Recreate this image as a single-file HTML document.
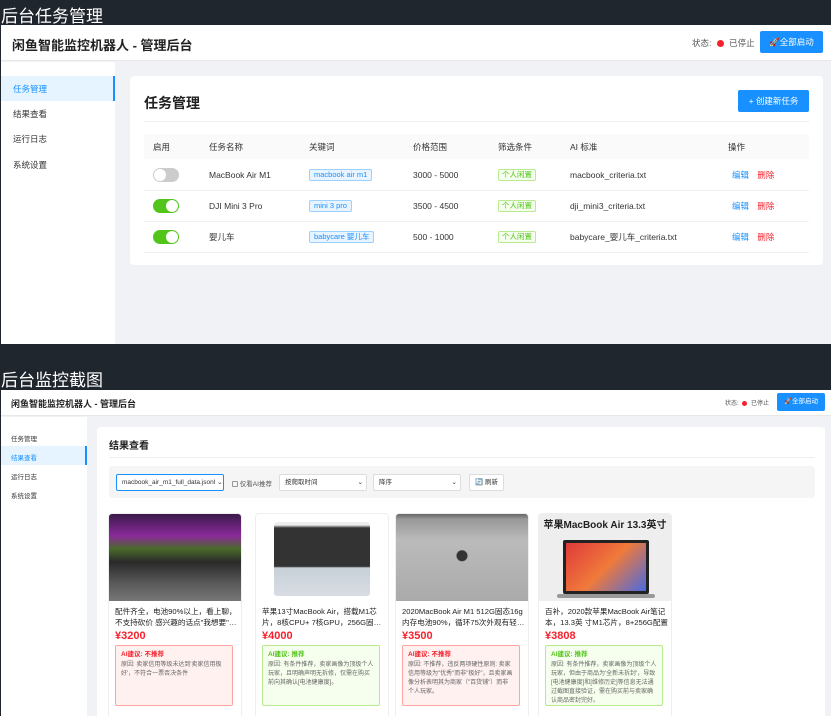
<!DOCTYPE html>
<html><head><meta charset="utf-8"><style>
*{margin:0;padding:0;box-sizing:border-box}
html,body{width:831px;height:716px;overflow:hidden}
body{position:relative;background:#20262e;font-family:"Liberation Sans","Noto Sans CJK SC",sans-serif;color:#333}
.a{position:absolute}
.lbl{color:#fff;font-size:17px;left:1px}
.t{font-size:8.5px;color:#333;white-space:nowrap;line-height:12px}
.tag{border:1px solid #9cd0ff;background:#e8f4ff;color:#1890ff;font-size:7.5px;line-height:10px;padding:0 4px;border-radius:2px;white-space:nowrap}
.gtag{border:1px solid #b7eb8f;background:#f6ffed;color:#52c41a;font-size:7.5px;line-height:10px;padding:0 3px;border-radius:2px;white-space:nowrap}
.sw{width:26px;height:14px;border-radius:7px}
.sw i{position:absolute;top:1px;width:12px;height:12px;border-radius:50%;background:#fff}
.btn{background:#1890ff;color:#fff;border-radius:2px;text-align:center}
.pc{background:#fff;border:1px solid #eee;border-radius:4px;width:134px;top:513px;height:210px;overflow:hidden}
.pc .img{height:87px}
.pc .tt{position:absolute;left:6px;top:92px;width:124px;font-size:7.6px;line-height:11px;color:#222;display:-webkit-box;-webkit-line-clamp:2;-webkit-box-orient:vertical;overflow:hidden;height:22px}
.pc .pr{position:absolute;left:6px;top:116px;font-size:11px;color:#f5222d;font-weight:bold}
.ai{position:absolute;left:6px;top:131px;width:118px;height:61px;border-radius:2px;padding:4px 5px;font-size:6px;line-height:9px;color:#666}
.ai b{display:block;font-size:6.5px;margin-bottom:2px}
.no{background:#fff1f0;border:1px solid #ffa39e}.no b{color:#f5222d}
.yes{background:#f6ffed;border:1px solid #b7eb8f}.yes b{color:#52c41a}
</style></head><body>
<div class="a lbl" style="top:2px">后台任务管理</div>
<div class="a" style="left:1px;top:25px;width:830px;height:319px;background:#f0f2f5"></div>
<div class="a" style="left:1px;top:25px;width:830px;height:36px;background:#fff;border-bottom:1px solid #e8e8e8"></div>
<div class="a" style="left:12px;top:35px;font-size:13px;font-weight:bold;color:#222">闲鱼智能监控机器人 - 管理后台</div>
<div class="a t" style="left:692px;top:37px;color:#555">状态: <span style="display:inline-block;width:7px;height:7px;border-radius:50%;background:#f5222d;vertical-align:-1px;margin:0 3px"></span> 已停止</div>
<div class="a btn" style="left:760px;top:31px;width:63px;height:22px;font-size:8.5px;line-height:22px">🚀全部启动</div>
<div class="a" style="left:1px;top:62px;width:114px;height:282px;background:#fff"></div>
<div class="a" style="left:1px;top:76px;width:114px;height:25px;background:#e6f4ff;border-right:2px solid #1890ff"></div>
<div class="a t" style="left:13px;top:83px;color:#1890ff">任务管理</div>
<div class="a t" style="left:13px;top:108px">结果查看</div>
<div class="a t" style="left:13px;top:133px">运行日志</div>
<div class="a t" style="left:13px;top:159px">系统设置</div>
<div class="a" style="left:130px;top:76px;width:693px;height:189px;background:#fff;border-radius:4px"></div>
<div class="a" style="left:144px;top:93px;font-size:14px;font-weight:bold;color:#222">任务管理</div>
<div class="a btn" style="left:738px;top:90px;width:71px;height:22px;font-size:8.5px;line-height:22px">+ 创建新任务</div>
<div class="a" style="left:144px;top:121px;width:665px;height:1px;background:#eee"></div>
<div class="a" style="left:144px;top:134px;width:665px;height:25px;background:#fafafa"></div>
<div class="a" style="left:144px;top:190px;width:665px;height:1px;background:#f0f0f0"></div>
<div class="a" style="left:144px;top:221px;width:665px;height:1px;background:#f0f0f0"></div>
<div class="a" style="left:144px;top:252px;width:665px;height:1px;background:#f0f0f0"></div>
<div class="a t" style="left:153px;top:141px">启用</div><div class="a t" style="left:209px;top:141px">任务名称</div><div class="a t" style="left:309px;top:141px">关键词</div><div class="a t" style="left:413px;top:141px">价格范围</div><div class="a t" style="left:498px;top:141px">筛选条件</div><div class="a t" style="left:570px;top:141px">AI 标准</div><div class="a t" style="left:728px;top:141px">操作</div>
<div class="a sw" style="left:153px;top:168px;background:#ccc"><i style="left:1px"></i></div>
<div class="a sw" style="left:153px;top:199px;background:#52c41a"><i style="left:13px"></i></div>
<div class="a sw" style="left:153px;top:230px;background:#52c41a"><i style="left:13px"></i></div>
<div class="a t" style="left:209px;top:169px">MacBook Air M1</div><div class="a tag" style="left:309px;top:169px">macbook air m1</div><div class="a t" style="left:413px;top:169px">3000 - 5000</div><div class="a gtag" style="left:498px;top:169px">个人闲置</div><div class="a t" style="left:570px;top:169px">macbook_criteria.txt</div>
<div class="a t" style="left:209px;top:200px">DJI Mini 3 Pro</div><div class="a tag" style="left:309px;top:200px">mini 3 pro</div><div class="a t" style="left:413px;top:200px">3500 - 4500</div><div class="a gtag" style="left:498px;top:200px">个人闲置</div><div class="a t" style="left:570px;top:200px">dji_mini3_criteria.txt</div>
<div class="a t" style="left:209px;top:231px">婴儿车</div><div class="a tag" style="left:309px;top:231px">babycare 婴儿车</div><div class="a t" style="left:413px;top:231px">500 - 1000</div><div class="a gtag" style="left:498px;top:231px">个人闲置</div><div class="a t" style="left:570px;top:231px">babycare_婴儿车_criteria.txt</div>
<div class="a t" style="left:732px;top:169px;color:#1890ff">编辑 <span style="color:#f5222d;margin-left:6px">删除</span></div>
<div class="a t" style="left:732px;top:200px;color:#1890ff">编辑 <span style="color:#f5222d;margin-left:6px">删除</span></div>
<div class="a t" style="left:732px;top:231px;color:#1890ff">编辑 <span style="color:#f5222d;margin-left:6px">删除</span></div>

<div class="a lbl" style="top:366px">后台监控截图</div>
<div class="a" style="left:1px;top:390px;width:830px;height:326px;background:#f0f2f5"></div>
<div class="a" style="left:1px;top:390px;width:830px;height:26px;background:#fff;border-bottom:1px solid #e8e8e8"></div>
<div class="a" style="left:11px;top:397px;font-size:9px;font-weight:bold;color:#222">闲鱼智能监控机器人 - 管理后台</div>
<div class="a" style="left:725px;top:398px;font-size:6px;color:#555;white-space:nowrap">状态: <span style="display:inline-block;width:5px;height:5px;border-radius:50%;background:#f5222d;vertical-align:-1px;margin:0 2px"></span> 已停止</div>
<div class="a btn" style="left:777px;top:393px;width:48px;height:18px;font-size:6.5px;line-height:18px">🚀全部启动</div>
<div class="a" style="left:1px;top:417px;width:86px;height:299px;background:#fff"></div>
<div class="a" style="left:1px;top:446px;width:86px;height:19px;background:#e6f4ff;border-right:2px solid #1890ff"></div>
<div class="a" style="left:11px;top:433px;font-size:6.5px">任务管理</div>
<div class="a" style="left:11px;top:452px;font-size:6.5px;color:#1890ff">结果查看</div>
<div class="a" style="left:11px;top:471px;font-size:6.5px">运行日志</div>
<div class="a" style="left:11px;top:490px;font-size:6.5px">系统设置</div>
<div class="a" style="left:97px;top:427px;width:728px;height:289px;background:#fff;border-radius:4px 4px 0 0;overflow:hidden">
<div class="a" style="left:12px;top:10px;font-size:10px;font-weight:bold;color:#222">结果查看</div>
<div class="a" style="left:12px;top:30px;width:706px;height:1px;background:#eee"></div>
<div class="a" style="left:12px;top:39px;width:706px;height:32px;background:#f5f5f5;border-radius:3px"></div>
<div class="a" style="left:19px;top:47px;width:108px;height:17px;background:#fff;border:1px solid #1890ff;border-radius:2px;font-size:6.5px;line-height:15px;padding-left:5px;white-space:nowrap">macbook_air_m1_full_data.jsonl ⌄</div>
<div class="a" style="left:135px;top:51px;font-size:6.5px;color:#555;white-space:nowrap"><span style="display:inline-block;width:6px;height:6px;border:1px solid #999;border-radius:1px;vertical-align:-1px"></span> 仅看AI推荐</div>
<div class="a" style="left:182px;top:47px;width:88px;height:17px;background:#fff;border:1px solid #ddd;border-radius:2px;font-size:6.5px;line-height:15px;padding-left:5px">按爬取时间<span style="float:right;margin-right:3px">⌄</span></div>
<div class="a" style="left:276px;top:47px;width:88px;height:17px;background:#fff;border:1px solid #ddd;border-radius:2px;font-size:6.5px;line-height:15px;padding-left:5px">降序<span style="float:right;margin-right:3px">⌄</span></div>
<div class="a" style="left:372px;top:47px;width:35px;height:17px;background:#fff;border:1px solid #ddd;border-radius:2px;font-size:6.5px;line-height:15px;text-align:center">🔄 刷新</div>
</div>

<div class="a pc" style="left:108px"><div class="img" style="background:linear-gradient(180deg,#3a1a4a 0,#8a2a9a 25%,#4a6a2a 40%,#2a2a2a 55%,#5a5a5a 80%,#777 100%)"></div>
<div class="tt">配件齐全，电池90%以上，看上聊，不支持砍价 感兴趣的话点"我想要"和我聊吧</div><div class="pr">¥3200</div>
<div class="ai no"><b>AI建议: 不推荐</b>原因: 卖家信用等级未达到'卖家信用极好'，不符合一票否决条件</div></div>
<div class="a pc" style="left:255px"><div class="img" style="background:#fff"><div style="margin:8px auto 0;width:96px;height:74px;border-radius:3px;background:linear-gradient(180deg,#eee 0,#eee 4%,#333 8%,#333 60%,#c8d0d8 62%,#d8dde3 100%)"></div></div>
<div class="tt">苹果13寸MacBook Air，搭载M1芯片，8核CPU+ 7核GPU，256G固态硬盘</div><div class="pr">¥4000</div>
<div class="ai yes"><b>AI建议: 推荐</b>原因: 有条件推荐，卖家画像为顶级个人玩家，且明确声明无拆修，仅需在购买前向其确认[电池健康度]。</div></div>
<div class="a pc" style="left:395px"><div class="img" style="background:radial-gradient(circle at 50% 48%,#333 0,#333 5px,transparent 6px),linear-gradient(180deg,#666 0,#999 6%,#bbb 30%,#aaa 100%)"></div>
<div class="tt">2020MacBook Air M1 512G固态16g内存电池90%，循环75次外观有轻微磕碰</div><div class="pr">¥3500</div>
<div class="ai no"><b>AI建议: 不推荐</b>原因: 不推荐，违反两项硬性原则: 卖家信用等级为"优秀"而非"极好"，且卖家画像分析表明其为商家（"百货铺"）而非个人玩家。</div></div>
<div class="a pc" style="left:538px"><div class="img" style="background:#eee;position:relative"><div style="position:absolute;left:0;right:0;top:2px;text-align:center;font-size:10px;font-weight:bold;color:#222">苹果MacBook Air 13.3英寸</div><div style="position:absolute;left:24px;top:26px;width:86px;height:54px;background:linear-gradient(135deg,#e03a3a,#f07a3a 50%,#4a6ae0);border:3px solid #222;border-radius:2px"></div><div style="position:absolute;left:18px;top:80px;width:98px;height:4px;background:#999;border-radius:2px"></div></div>
<div class="tt">百补，2020款苹果MacBook Air笔记本，13.3英 寸M1芯片，8+256G配置</div><div class="pr">¥3808</div>
<div class="ai yes"><b>AI建议: 推荐</b>原因: 有条件推荐，卖家画像为顶级个人玩家，但由于商品为'全新未拆封'，导致[电池健康度]和[维修历史]等信息无法通过截图直接验证，需在购买前与卖家确认商品密封完好。</div></div>
</body></html>
